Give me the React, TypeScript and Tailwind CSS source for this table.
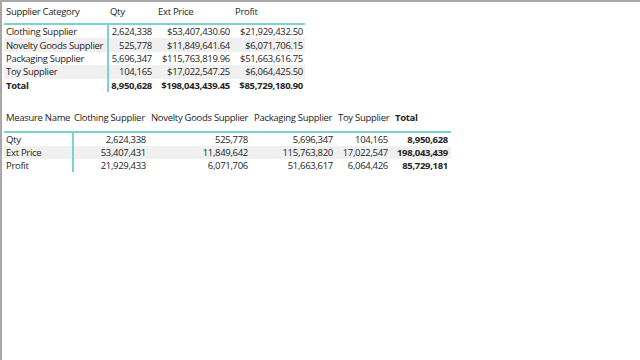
import React from "react";

const t1Rows = [
  ["Clothing Supplier", "2,624,338", "$53,407,430.60", "$21,929,432.50"],
  ["Novelty Goods Supplier", "525,778", "$11,849,641.64", "$6,071,706.15"],
  ["Packaging Supplier", "5,696,347", "$115,763,819.96", "$51,663,616.75"],
  ["Toy Supplier", "104,165", "$17,022,547.25", "$6,064,425.50"],
];

const t2Rows = [
  ["Qty", "2,624,338", "525,778", "5,696,347", "104,165", "8,950,628"],
  ["Ext Price", "53,407,431", "11,849,642", "115,763,820", "17,022,547", "198,043,439"],
  ["Profit", "21,929,433", "6,071,706", "51,663,617", "6,064,426", "85,729,181"],
];

export default function App() {
  return (
    <div
      className="w-[640px] h-[360px] bg-white border-t-2 border-l-2 border-[#a8a8a8] text-[#252423] overflow-hidden"
      style={{ fontFamily: '"Open Sans", "Noto Sans", sans-serif' }}
    >
      {/* Table 1 */}
      <div className="ml-[2px] w-[301px] text-[9.5px] leading-[13px] tracking-[-0.3px]">
        <div className="flex h-[23px] items-start pt-[3px] border-b-2 border-[#7dd3cc] whitespace-nowrap">
          <div className="w-[103px] pl-[2px]">Supplier Category</div>
          <div className="w-[48px] pl-[3px]">Qty</div>
          <div className="w-[78px] pl-[3px]">Ext Price</div>
          <div className="w-[72px] pl-[2px]">Profit</div>
        </div>
        {t1Rows.map((r, i) => (
          <div key={i} className={`flex h-[13.4px] items-center whitespace-nowrap ${i % 2 === 1 ? "bg-[#f0f0f0]" : ""}`}>
            <div className="w-[103px] pl-[2px]">{r[0]}</div>
            <div className="w-[48px] h-full flex items-center justify-end pr-[3px] border-l-2 border-[#7dd3cc]">{r[1]}</div>
            <div className="w-[78px] text-right pr-[3px]">{r[2]}</div>
            <div className="w-[72px] text-right pr-[2px]">{r[3]}</div>
          </div>
        ))}
        <div className="flex h-[13.4px] items-center font-bold whitespace-nowrap">
          <div className="w-[103px] pl-[2px]">Total</div>
          <div className="w-[48px] h-full flex items-center justify-end pr-[3px] border-l-2 border-[#7dd3cc]">8,950,628</div>
          <div className="w-[78px] text-right pr-[3px]">$198,043,439.45</div>
          <div className="w-[72px] text-right pr-[2px]">$85,729,180.90</div>
        </div>
      </div>

      {/* Table 2 */}
      <div className="ml-[2px] mt-[13px] w-[447px] text-[9.5px] leading-[13px] tracking-[-0.3px]">
        <div className="flex h-[28px] items-center border-b-2 border-[#7dd3cc] whitespace-nowrap">
          <div className="w-[68px] pl-[2px]">Measure Name</div>
          <div className="w-[77px] pl-[2px]">Clothing Supplier</div>
          <div className="w-[102px] pl-[2px]">Novelty Goods Supplier</div>
          <div className="w-[85px] pl-[3px]">Packaging Supplier</div>
          <div className="w-[55px] pl-[2px]">Toy Supplier</div>
          <div className="w-[60px] pl-[4px] font-bold">Total</div>
        </div>
        {t2Rows.map((r, i) => (
          <div key={i} className={`flex h-[13px] items-center whitespace-nowrap ${i % 2 === 1 ? "bg-[#f0f0f0]" : ""}`}>
            <div className="w-[68px] pl-[2px]">{r[0]}</div>
            <div className="w-[77px] h-full flex items-center justify-end pr-[3px] border-l-2 border-[#7dd3cc]">{r[1]}</div>
            <div className="w-[102px] text-right pr-[3px]">{r[2]}</div>
            <div className="w-[85px] text-right pr-[3px]">{r[3]}</div>
            <div className="w-[55px] text-right pr-[3px]">{r[4]}</div>
            <div className="w-[60px] text-right pr-[3px] font-bold">{r[5]}</div>
          </div>
        ))}
      </div>
    </div>
  );
}
